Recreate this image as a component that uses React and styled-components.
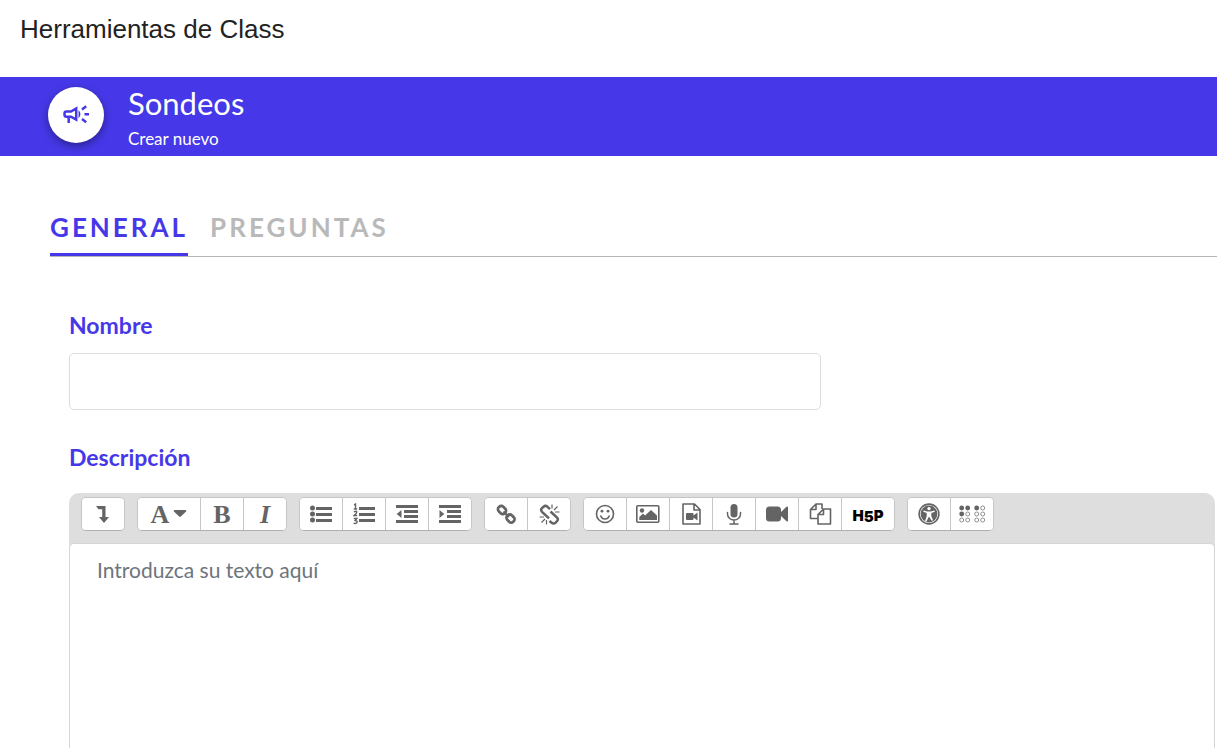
import React, { useState } from "react";
import styled, { createGlobalStyle } from "styled-components";

const ink = "#646464";
const brand = "#4638e8";

const icons = {
  expand: (
    <svg width="14" height="19" viewBox="0 0 14 19">
      <path d="M0 1h9.500v11H13L8 18 3 12h3.200V4.300H2.500z" fill={ink} />
    </svg>
  ),
  caret: (
    <svg width="14" height="8" viewBox="0 0 14 8">
      <path d="M1.500 0h11q1.500 .3 .6 1.500L7.800 6.600q-.8.800-1.600 0L.9 1.500Q0 .3 1.500 0z" fill={ink} />
    </svg>
  ),
  bullets: (
    <svg width="22" height="18" viewBox="0 0 22 18" fill={ink}>
      <circle cx="2.500" cy="3" r="2.500" />
      <circle cx="2.500" cy="9" r="2.500" />
      <circle cx="2.500" cy="15" r="2.500" />
      <path d="M6 2h16v3H6zM6 8h16v3H6zM6 14h16v3H6z" />
    </svg>
  ),
  numbers: (
    <svg width="22" height="22" viewBox="0 0 22 22">
      <path d="M6 4h16v3H6zM6 10h16v3H6zM6 16h16v3H6z" fill={ink} />
      <path
        d="M1 1.800 2.500 1v5M.8 6h3.400M.8 9q2.800-1.500 3 .2 0 1-2.800 3.300h3.200M.8 15.500h3L2.200 17.500q3 .3 1.200 2.600-1.400.8-2.800 0"
        fill="none"
        stroke={ink}
        strokeWidth="1.400"
      />
    </svg>
  ),
  outdent: (
    <svg width="22" height="18" viewBox="0 0 22 18">
      <path d="M0 0h22v3H0zM8 5h14v3H8zM8 10h14v3H8zM0 15h22v3H0zM5.500 5v8L.7 9z" fill={ink} />
    </svg>
  ),
  indent: (
    <svg width="22" height="18" viewBox="0 0 22 18">
      <path d="M0 0h22v3H0zM8 5h14v3H8zM8 10h14v3H8zM0 15h22v3H0zM.5 5v8L5.300 9z" fill={ink} />
    </svg>
  ),
  link: (
    <svg width="21" height="21" viewBox="0 0 21 21" fill="none" stroke={ink} strokeWidth="2.700">
      <rect x="-4.200" y="-3.200" width="8.400" height="6.400" rx="2.800" transform="translate(6 6) rotate(45)" />
      <rect x="-4.200" y="-3.200" width="8.400" height="6.400" rx="2.800" transform="translate(14.500 14.500) rotate(45)" />
      <path d="M7.500 7.500l5.500 5.500" strokeWidth="2" />
    </svg>
  ),
  unlink: (
    <svg width="21" height="21" viewBox="0 0 21 21" fill="none" stroke={ink}>
      <path
        d="M11 5.200 8.300 2.600Q6.300 1 4.400 2.800L3 4.200Q1.300 6 3 7.800L10 14.300M10.500 17l2.200 1.800q2 1.600 3.900-.2l1.400-1.400q1.700-1.800 0-3.600L11.500 7.500"
        strokeWidth="2.500"
      />
      <path d="M13 .5v4M18.500 2.500l-3.500 3.500M20.500 8H16M7.500 16v4.500M6 15l-3.500 3.500M5 13H.5" strokeWidth="1.200" />
    </svg>
  ),
  smile: (
    <svg width="20" height="20" viewBox="0 0 20 20" fill="none" stroke={ink} strokeWidth="1.600">
      <circle cx="10" cy="10" r="8.500" />
      <path d="M5.800 12q1.200 3 4.200 3t4.200-3" strokeLinecap="round" />
      <g fill={ink} stroke="none">
        <circle cx="7" cy="7.200" r="1.400" />
        <circle cx="13" cy="7.200" r="1.400" />
      </g>
    </svg>
  ),
  image: (
    <svg width="24" height="18" viewBox="0 0 24 18">
      <rect x=".8" y=".8" width="22" height="16.400" rx="1" fill="none" stroke={ink} strokeWidth="1.600" />
      <circle cx="6" cy="5.500" r="2.200" fill={ink} />
      <path d="M3.300 15v-3L7 8.500l2 2L15 5l6 5.500V15z" fill={ink} />
    </svg>
  ),
  fileVideo: (
    <svg width="19" height="22" viewBox="0 0 19 22">
      <path d="M1 1h11.500L18 6.500V21H1zM12 1v6h6" fill="none" stroke={ink} strokeWidth="1.600" strokeLinejoin="round" />
      <path d="M5 10h5.500q1 0 1 1v1.500L15.500 9.500v8L11.500 14.500V16q0 1-1 1H5q-1 0-1-1v-5q0-1 1-1z" fill={ink} />
    </svg>
  ),
  mic: (
    <svg width="16" height="21" viewBox="0 0 16 21">
      <rect x="4.500" y="0" width="7" height="13.500" rx="3.500" fill={ink} />
      <path d="M1.500 8.500V10a6.500 6 0 0 0 13 0V8.500M8 16v3.800M4 20h8" fill="none" stroke={ink} strokeWidth="1.500" strokeLinecap="round" />
    </svg>
  ),
  camera: (
    <svg width="22" height="16" viewBox="0 0 22 16">
      <path
        d="M3.500.5h8Q15 .5 15 4v2L20.500 .8Q22 .2 22 1.500v13q0 1.300-1.500.7L15 10v2q0 3.500-3.500 3.500h-8Q0 15.500 0 12V4Q0 .5 3.500.5z"
        fill={ink}
      />
    </svg>
  ),
  copy: (
    <svg width="23" height="22" viewBox="0 0 23 22" fill="none" stroke={ink} strokeWidth="1.600" strokeLinejoin="round">
      <path d="M13 6V1H7L1.500 6.500V15.500H9M7 1v5.500H1.500M14.500 6h7v15H9v-9.500zM14.500 6v5.500H9" />
    </svg>
  ),
  access: (
    <svg width="22" height="22" viewBox="0 0 22 22">
      <circle cx="11" cy="11" r="9.900" fill="#fff" stroke={ink} strokeWidth="1.600" />
      <circle cx="11" cy="11" r="8.400" fill={ink} />
      <circle cx="11" cy="5.600" r="1.700" fill="#fff" />
      <path d="M5.500 7.500l3.800 1h3.400l3.800-1 .3 1.200-3.500 1.300v3l1.700 4.300-1.300.5L11.300 14h-.6l-2.400 4.800-1.300-.5L8.700 13v-3L5.200 8.700z" fill="#fff" />
    </svg>
  ),
  braille: (
    <svg width="27" height="18" viewBox="0 0 27 18">
      <g fill={ink}>
        <circle cx="2.700" cy="3" r="2.400" />
        <circle cx="8.700" cy="3" r="2.400" />
        <circle cx="2.700" cy="9" r="2.400" />
        <circle cx="17.700" cy="3" r="2.400" />
      </g>
      <g fill="none" stroke={ink} strokeWidth=".7">
        <circle cx="8.700" cy="9" r="2" />
        <circle cx="2.700" cy="15" r="2" />
        <circle cx="8.700" cy="15" r="2" />
        <circle cx="23.700" cy="3" r="2" />
        <circle cx="17.700" cy="9" r="2" />
        <circle cx="23.700" cy="9" r="2" />
        <circle cx="17.700" cy="15" r="2" />
        <circle cx="23.700" cy="15" r="2" />
      </g>
    </svg>
  ),
};

const groups = [
  [{ label: "Mostrar más botones", icon: icons.expand }],
  [
    { label: "Estilos de párrafo", letter: "A", icon: icons.caret, size: "wide" },
    { label: "Negrita", letter: "B" },
    { label: "Cursiva", letter: "I", italic: true },
  ],
  [
    { label: "Lista con viñetas", icon: icons.bullets },
    { label: "Lista numerada", icon: icons.numbers },
    { label: "Reducir sangría", icon: icons.outdent },
    { label: "Aumentar sangría", icon: icons.indent },
  ],
  [
    { label: "Enlace", icon: icons.link },
    { label: "Quitar enlace", icon: icons.unlink },
  ],
  [
    { label: "Emoticonos", icon: icons.smile },
    { label: "Imagen", icon: icons.image },
    { label: "Multimedia", icon: icons.fileVideo },
    { label: "Grabar audio", icon: icons.mic },
    { label: "Grabar vídeo", icon: icons.camera },
    { label: "Administrar archivos", icon: icons.copy },
    { label: "Insertar H5P", h5p: true, size: "medium" },
  ],
  [
    { label: "Comprobador de accesibilidad", icon: icons.access },
    { label: "Ayuda para lector de pantalla", icon: icons.braille },
  ],
];

export default function App() {
  const [tab, setTab] = useState("General");
  const [name, setName] = useState("");
  const [description, setDescription] = useState("");

  return (
    <Page>
      <GlobalStyle />
      <PageTitle>Herramientas de Class</PageTitle>
      <Banner>
        <Badge>
          <svg width="28" height="24" viewBox="0 0 28 24" fill="none" stroke={brand} strokeWidth="2.500">
            <path d="M9 8.500H4.500Q2.500 8.500 2.500 10.500v1.200Q2.500 13.700 4.500 13.700H9l5.200 3V5.500zM6.700 14v6" />
            <path d="M16.500 7q4 4.200 0 8.400z" fill={brand} stroke="none" />
            <path d="M20 6.500l4.200-3.200M22.500 11.300H27M20 16.100l4.200 3.200" />
          </svg>
        </Badge>
        <div>
          <BannerTitle>Sondeos</BannerTitle>
          <BannerText>Crear nuevo</BannerText>
        </div>
      </Banner>
      <Tabs role="tablist">
        {["General", "Preguntas"].map((item) => (
          <Tab
            key={item}
            role="tab"
            aria-selected={tab === item}
            $active={tab === item}
            onClick={() => setTab(item)}
          >
            {item}
          </Tab>
        ))}
      </Tabs>
      <Form>
        <Label htmlFor="name">Nombre</Label>
        <NameInput id="name" value={name} onChange={(e) => setName(e.target.value)} />
        <Label htmlFor="description">Descripción</Label>
        <Editor>
          <Toolbar role="toolbar">
            {groups.map((group) => (
              <ButtonGroup key={group[0].label}>
                {group.map((item) => (
                  <ToolButton key={item.label} type="button" aria-label={item.label} $size={item.size}>
                    {item.letter && <Letter $italic={item.italic}>{item.letter}</Letter>}
                    {item.h5p && (
                      <H5P>
                        H<span>5</span>P
                      </H5P>
                    )}
                    {item.icon}
                  </ToolButton>
                ))}
              </ButtonGroup>
            ))}
          </Toolbar>
          <TextArea
            id="description"
            placeholder="Introduzca su texto aquí"
            value={description}
            onChange={(e) => setDescription(e.target.value)}
          />
        </Editor>
      </Form>
    </Page>
  );
}

const GlobalStyle = createGlobalStyle`
  * {
    box-sizing: border-box;
  }
  body {
    margin: 0;
    background: #fff;
    font-family: Lato, sans-serif;
  }
  button, input, textarea {
    font-family: inherit;
  }
`;

const Page = styled.main`
  display: flex;
  flex-direction: column;
  min-height: 100vh;
`;

const PageTitle = styled.h1`
  margin: 0;
  padding: 13px 20px 32px;
  font: 400 26px/32px "Liberation Sans", sans-serif;
  color: #222;
`;

const Banner = styled.header`
  display: flex;
  align-items: center;
  gap: 24px;
  padding: 5px 48px 4px;
  background: ${brand};
  color: #fff;
`;

const Badge = styled.div`
  display: flex;
  align-items: center;
  justify-content: center;
  width: 56px;
  height: 56px;
  margin-bottom: 4px;
  border-radius: 50%;
  background: #fff;
  box-shadow: 0 3px 8px rgba(0, 0, 0, 0.4);
`;

const BannerTitle = styled.h2`
  margin: 0;
  font-size: 31px;
  line-height: 42px;
  font-weight: 400;
`;

const BannerText = styled.p`
  margin: 0;
  padding-top: 2px;
  font-size: 17px;
  line-height: 26px;
`;

const Tabs = styled.div`
  display: flex;
  gap: 22px;
  margin: 50px 0 0 50px;
  border-bottom: 1px solid #b5b5b5;
`;

const Tab = styled.button`
  padding: 7px 0 11px;
  border: 0;
  border-bottom: 3px solid ${({ $active }) => ($active ? brand : "transparent")};
  background: none;
  color: ${({ $active }) => ($active ? brand : "#b9b9b9")};
  font-size: 26px;
  line-height: 29px;
  font-weight: 700;
  letter-spacing: 3px;
  text-transform: uppercase;
  cursor: pointer;
`;

const Form = styled.form`
  display: flex;
  flex: 1;
  flex-direction: column;
  padding: 52px 2px 0 69px;
`;

const Label = styled.label`
  color: ${brand};
  font-size: 23px;
  line-height: 32px;
  font-weight: 700;
`;

const NameInput = styled.input`
  width: 100%;
  max-width: 752px;
  height: 57px;
  margin: 12px 0 31px;
  padding: 0 27px;
  border: 1px solid #dedede;
  border-radius: 5px;
  font-size: 21px;
`;

const Editor = styled.div`
  display: flex;
  flex: 1;
  flex-direction: column;
  margin-top: 20px;
  border-radius: 10px 10px 0 0;
  background: #dedede;
`;

const Toolbar = styled.div`
  display: flex;
  flex-wrap: wrap;
  gap: 12px;
  padding: 4px 12px 12px;
`;

const ButtonGroup = styled.div`
  display: flex;
  border: 1px solid #c6c6c6;
  border-bottom-color: #b0b0b0;
  border-radius: 5px;
  background: #fff;
  overflow: hidden;
  button + button {
    border-left: 1px solid #c6c6c6;
  }
`;

const widths = { wide: "62px", medium: "52px" };

const ToolButton = styled.button`
  display: flex;
  align-items: center;
  justify-content: center;
  gap: 4px;
  box-sizing: content-box;
  width: ${({ $size }) => widths[$size] || "42px"};
  height: 32px;
  padding: 0;
  border: 0;
  background: #fff;
  cursor: pointer;
`;

const Letter = styled.span`
  padding-top: 2px;
  color: ${ink};
  font: 700 26px/32px "Liberation Serif", serif;
  font-style: ${({ $italic }) => ($italic ? "italic" : "normal")};
`;

const H5P = styled.span`
  display: flex;
  padding-top: 4px;
  color: #000;
  font: 900 15px/28px Inter, sans-serif;
  span {
    padding-top: 1px;
  }
`;

const TextArea = styled.textarea`
  display: block;
  flex: 1;
  width: 100%;
  min-height: 200px;
  padding: 10px 27px;
  border: 1px solid #d5d5da;
  border-bottom: 0;
  border-radius: 5px 5px 0 0;
  background: #fff;
  color: #222;
  font-size: 21px;
  line-height: 32px;
  resize: none;
  outline: none;
  &::placeholder {
    color: #6d757d;
    opacity: 1;
  }
`;
